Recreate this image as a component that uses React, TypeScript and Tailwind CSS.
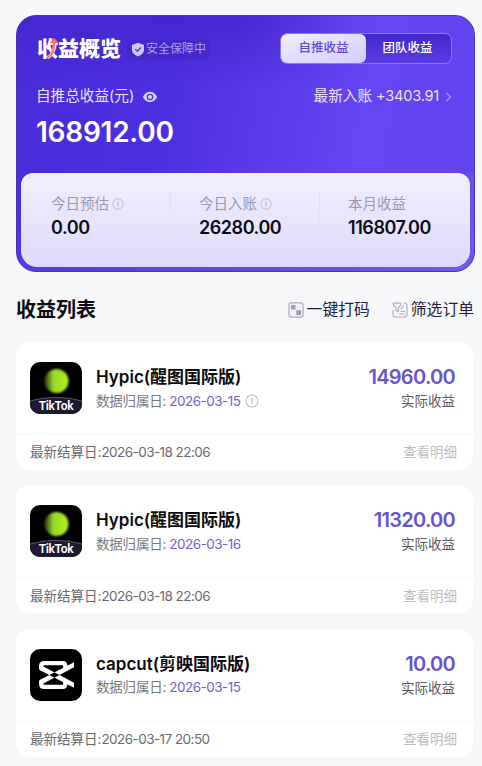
import { FaChevronRight } from 'react-icons/fa6';
import clsx from 'clsx';

const stats = [
  { label: '今日预估', value: '0.00', info: true },
  { label: '今日入账', value: '26280.00', info: true },
  { label: '本月收益', value: '116807.00', info: false },
];

const orders = [
  { app: 'hypic', name: 'Hypic(醒图国际版)', date: '2026-03-15', info: true, amount: '14960.00', settled: '2026-03-18 22:06' },
  { app: 'hypic', name: 'Hypic(醒图国际版)', date: '2026-03-16', info: false, amount: '11320.00', settled: '2026-03-18 22:06' },
  { app: 'capcut', name: 'capcut(剪映国际版)', date: '2026-03-15', info: false, amount: '10.00', settled: '2026-03-17 20:50' },
];

function InfoIcon({ className }: { className?: string }) {
  return (
    <svg viewBox="0 0 14 14" fill="none" stroke="currentColor" className={className}>
      <circle cx="7" cy="7" r="6" strokeWidth="1.1" />
      <path d="M7 4v6" strokeWidth="1.3" />
    </svg>
  );
}

function ShieldIcon() {
  return (
    <svg viewBox="0 0 14 15" className="h-[15px] w-[14px]">
      <path d="M7 .8 13 3v5c0 3-2.400 5-6 6.400C3.400 13 1 11 1 8V3Z" fill="#cdc7f3" />
      <path d="m4.300 7.200 2 2 3.500-3.600" fill="none" stroke="#5036d2" strokeWidth="1.400" />
    </svg>
  );
}

function EyeIcon() {
  return (
    <svg viewBox="0 0 16 12" className="h-3 w-4">
      <path d="M.8 6C2.500 2.600 5 .8 8 .8S13.500 2.600 15.200 6C13.500 9.400 11 11.200 8 11.200S2.500 9.400.8 6Z" fill="#d6d0f8" />
      <circle cx="8" cy="6" r="2.700" fill="none" stroke="#5238df" strokeWidth="1.300" />
    </svg>
  );
}

function MosaicIcon() {
  return (
    <svg viewBox="0 0 16 16" className="size-4">
      <rect x=".9" y=".9" width="14.200" height="14.200" rx="2.500" fill="#f1f1f7" stroke="#b0b0c3" strokeWidth="1.200" />
      <path d="M3 3h4.500v4.500H3zM8.300 8.300h4.700v4.700H8.300z" fill="#9c9cb5" />
    </svg>
  );
}

function FilterIcon() {
  return (
    <svg viewBox="0 0 16 16" fill="none" stroke="#b0b0c3" strokeWidth="1.200" strokeLinejoin="round" strokeLinecap="round" className="size-4">
      <path d="M12 1h.5c1.700 0 2.500.8 2.500 2.500v9c0 1.700-.8 2.500-2.500 2.500h-9C1.800 15 1 14.200 1 12.500V8.500" />
      <path d="M1.200 1.200h7.600v1.600L6.300 5.800v4L4 8.400V5.800L1.200 2.800Z" />
      <path d="M11.500 3.800 9 7M9 9.500h3.600M7.500 12h5.100" />
    </svg>
  );
}

function HypicLogo() {
  return (
    <div className="relative size-[52px] shrink-0 overflow-hidden rounded-[10px] bg-black">
      <svg viewBox="0 0 52 52" className="size-full">
        <defs>
          <linearGradient id="orb" x1="0" x2="1">
            <stop offset="0" stopColor="#6f9d22" stopOpacity=".4" />
            <stop offset=".35" stopColor="#95d628" />
            <stop offset="1" stopColor="#b4f321" />
          </linearGradient>
          <filter id="soft" x="-20%" y="-20%" width="140%" height="140%">
            <feGaussianBlur stdDeviation=".9" />
          </filter>
        </defs>
        <circle cx="26.500" cy="19" r="12" fill="url(#orb)" filter="url(#soft)" />
        <path d="M0 39Q26 31.500 52 39V52H0Z" fill="#1d1930" />
        <path d="M0 39Q26 31.500 52 39" fill="none" stroke="#77758a" strokeWidth=".7" />
      </svg>
      <span className="absolute inset-x-0 bottom-px text-center font-[family-name:Roboto] text-[12px] leading-[13px] font-semibold tracking-[-0.3px] text-white">
        TikTok
      </span>
    </div>
  );
}

function CapcutLogo() {
  return (
    <div className="size-[52px] shrink-0 rounded-[10px] bg-black">
      <svg viewBox="0 0 52 52" fill="none" stroke="#fff" strokeWidth="4.300">
        <path d="M11.200 20V17c0-1.900.9-2.800 2.800-2.800h18.500c1.900 0 2.800.9 2.800 2.800v3.200" />
        <path d="M11.200 32V35c0 1.900.9 2.800 2.800 2.800h18.500c1.900 0 2.800-.9 2.800-2.800v-3.200" />
        <path d="M12 16.800 44 33.800v5L9.100 20.800zM12 35.200 44 18.200v-5L9.100 31.200z" fill="#fff" stroke="none" />
      </svg>
    </div>
  );
}

function Summary() {
  return (
    <section className="relative ml-4 h-[257px] w-[459px] overflow-hidden rounded-[20px] border border-[#4a2fc4] bg-linear-to-br from-[#4526cf] from-20% via-[#5a3ae6] via-55% to-[#7558ec] px-1">
      <div className="absolute inset-x-0 top-0 h-[157px] bg-linear-[100deg,#4a2bd9_0%,#4e2fe0_35%,#5a3ae9_55%,#6646f2_75%,#6343ec_100%]" />
      <div className="absolute inset-x-0 top-0 h-[70px] bg-linear-to-r from-[#4324c8]/50 via-[#3f20c4]/60 via-50% to-transparent to-72% mask-b-from-10%" />
      <div className="relative flex h-[157px] flex-col pr-[18px] pl-[15px]">
        <div className="flex h-12 shrink-0 items-start justify-between pt-[17px]">
          <div className="ml-px flex h-8 shrink-0 items-center">
            <h1 className="relative text-[21px] leading-[30px] font-black text-white">
              收益概览
              <svg viewBox="0 0 12 22" className="absolute top-[3px] left-[10px] h-[22px] w-3">
                <path d="M.5 20.500C5 18 7.500 12 7 4" fill="none" stroke="#fa8477" strokeWidth="2.800" />
                <path d="M2.500 6.500 7 .8 11.500 6Z" fill="#fa7768" />
              </svg>
            </h1>
            <div className="ml-1.5 flex h-[21px] items-center gap-px rounded-md bg-[#4227bd]/60 px-1 text-xs text-[#aaa0ea]">
              <ShieldIcon />
              <span>安全保障中</span>
            </div>
          </div>
          <div className="flex h-[31px] w-[172px] shrink-0 rounded-[7px] border border-[#8c76f3] bg-linear-to-b from-[#4326c8] to-[#5b3ce4] text-[12.5px] font-medium text-white">
            <button className="w-[85px] rounded-md bg-linear-to-br from-[#f2effe] to-[#d3cbfb] text-[#5e48d6]">自推收益</button>
            <button className="flex-1 pr-0.5">团队收益</button>
          </div>
        </div>
        <div className="mt-[21px] flex h-6 shrink-0 items-center text-[14.6px] text-[#e7e2fd]">
          <span>自推总收益(元)</span>
          <span className="ml-2"><EyeIcon /></span>
          <span className="ml-auto">最新入账 <span className="tracking-[-0.25px]">+3403.91</span></span>
          <FaChevronRight className="ml-1 -mr-px size-2.5 text-[#a895f7]" />
        </div>
        <p className="mt-[5px] text-[28px] leading-9 font-semibold tracking-[-0.25px] text-white">168912.00</p>
      </div>
      <div className="relative grid h-[94px] grid-cols-[149px_149px_1fr] rounded-t-[12px] rounded-b-[16px] bg-linear-to-b from-[#f1effd] to-[#dedafb] pt-5">
        {stats.map((stat, i) => (
          <div key={stat.label} className={clsx('h-[50px]', i > 0 ? 'border-l border-[#e3e0f2] pl-7' : 'pl-[30px]')}>
            <div className="flex h-[22px] items-center text-[14.5px] text-[#9b98ae]">
              {stat.label}
              {stat.info && <InfoIcon className="ml-[3px] size-3 text-[#bcb9cb]" />}
            </div>
            <p className="text-[18px] leading-[26px] font-semibold tracking-[-0.45px] text-[#0d0c14]">{stat.value}</p>
          </div>
        ))}
      </div>
    </section>
  );
}

export default function App() {
  return (
    <main className="h-[766px] w-[482px] overflow-hidden bg-[#f5f7f9] pt-[15px] font-[family-name:Inter,'Noto_Sans_CJK_SC',sans-serif]">
      <Summary />

      <div className="flex h-[70px] items-center pt-[5px] pr-2 pl-4 text-[#1f1d38]">
        <h2 className="text-[20px] font-bold text-[#0c0c10]">收益列表</h2>
        <button className="ml-auto flex items-center gap-[3px] text-[15.8px]">
          <MosaicIcon />
          一键打码
        </button>
        <button className="ml-[22px] flex items-center gap-[3px] text-[15.8px]">
          <FilterIcon />
          筛选订单
        </button>
      </div>

      <div className="flex flex-col gap-[15.3px] pl-4">
        {orders.map((order) => (
          <article key={order.name + order.date} className="h-32 w-[457px] shrink-0 rounded-[14px] bg-white">
            <div className="flex h-[93px] border-b border-[#f5f6f8] pt-5 pr-[18px] pl-3.5">
              {order.app === 'hypic' ? <HypicLogo /> : <CapcutLogo />}
              <div className="ml-3.5">
                <h3 className="h-[26px] text-[17px] leading-[30px] font-semibold text-[#0b0b0d]">{order.name}</h3>
                <div className="flex h-[26px] items-center text-[13.5px] text-[#77777a]">
                  <span className="tracking-[-0.2px]">数据归属日:</span>
                  <span className="ml-[3px] tracking-[-0.5px] text-[#7262cb]">{order.date}</span>
                  {order.info && <InfoIcon className="ml-1 size-3.5 text-[#c0c0c4]" />}
                </div>
              </div>
              <div className="ml-auto text-right">
                <p className="h-[26px] text-[20px] leading-[30px] font-semibold tracking-[-0.7px] text-[#6854cf]">{order.amount}</p>
                <p className="text-[13.5px] leading-[26px] text-[#5c5c60]">实际收益</p>
              </div>
            </div>
            <div className="flex h-[35px] items-center justify-between pr-4 pl-3.5 text-[13.5px] text-[#6a6a6e]">
              <span>最新结算日:<span className="tracking-[-0.55px]">{order.settled}</span></span>
              <span className="text-[#bdbdc0]">查看明细</span>
            </div>
          </article>
        ))}
      </div>
    </main>
  );
}
